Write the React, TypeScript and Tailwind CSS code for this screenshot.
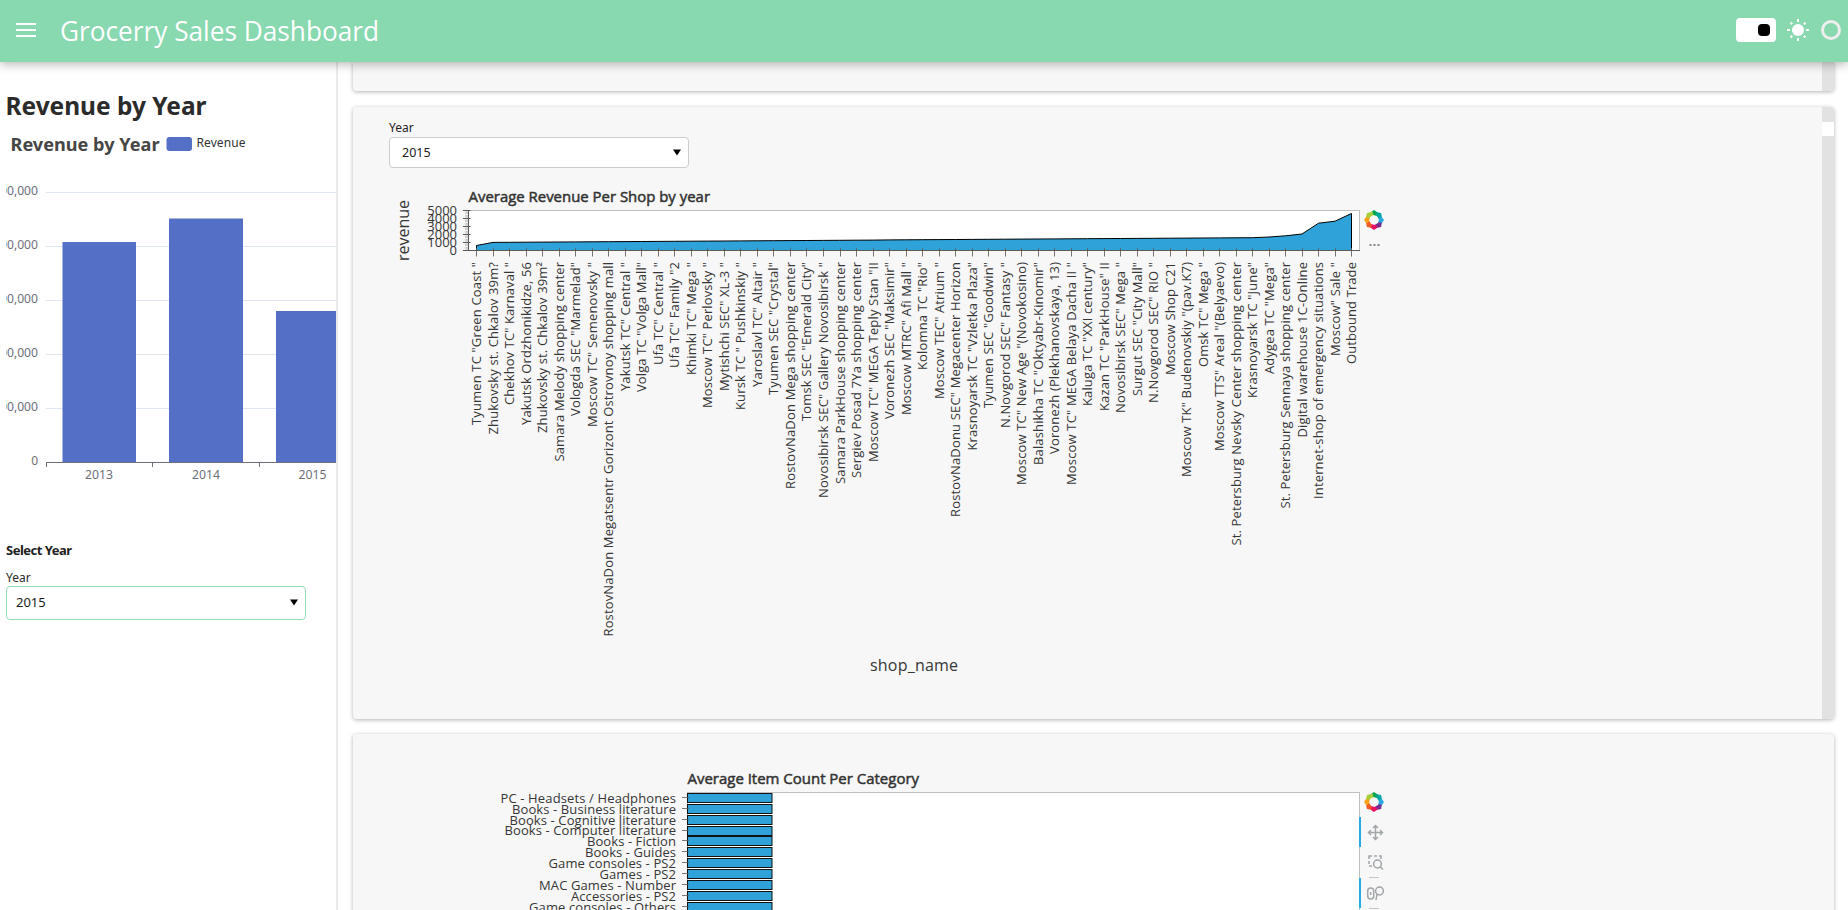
import React from "react";

const SHOPS: [string, number][] = [
  ['Tyumen TC "Green Coast "', 425], ["Zhukovsky st. Chkalov 39m?", 434.5], ['Chekhov TC" Karnaval "', 405], ["Yakutsk Ordzhonikidze, 56", 425],
  ["Zhukovsky st. Chkalov 39m²", 433], ["Samara Melody shopping center", 461.5], ['Vologda SEC "Marmelad"', 416], ['Moscow TC" Semenovsky "', 427],
  ["RostovNaDon Megatsentr Gorizont Ostrovnoy shopping mall", 636.5], ['Yakutsk TC" Central "', 391], ['Volga TC "Volga Mall"', 392], ['Ufa TC" Central "', 365],
  ['Ufa TC" Family "2', 368], ['Khimki TC" Mega "', 375], ['Moscow TC" Perlovsky "', 408], ['Mytishchi SEC" XL-3 "', 391], ['Kursk TC " Pushkinskiy "', 410],
  ['Yaroslavl TC" Altair "', 387], ['Tyumen SEC "Crystal"', 395], ["RostovNaDon Mega shopping center", 489], ['Tomsk SEC "Emerald City"', 421],
  ['Novosibirsk SEC" Gallery Novosibirsk "', 498], ["Samara ParkHouse shopping center", 484], ["Sergiev Posad 7Ya shopping center", 478], ['Moscow TC" MEGA Teply Stan "II', 462],
  ['Voronezh SEC "Maksimir"', 419], ['Moscow MTRC" Afi Mall "', 415], ['Kolomna TC "Rio"', 370], ['Moscow TEC" Atrium "', 399], ['RostovNaDonu SEC" Megacenter Horizon', 517],
  ['Krasnoyarsk TC "Vzletka Plaza"', 450.5], ['Tyumen SEC "Goodwin"', 408], ['N.Novgorod SEC" Fantasy "', 428], ['Moscow TC" New Age "(Novokosino)', 485],
  ['Balashikha TC "Oktyabr-Kinomir"', 465], ["Voronezh (Plekhanovskaya, 13)", 454], ['Moscow TC" MEGA Belaya Dacha II "', 485], ['Kaluga TC "XXI century"', 406],
  ['Kazan TC "ParkHouse" II', 411], ['Novosibirsk SEC" Mega "', 413], ['Surgut SEC "City Mall"', 396], ['N.Novgorod SEC" RIO "', 403], ["Moscow Shop C21", 375],
  ['Moscow TK" Budenovskiy "(pav.K7)', 477], ['Omsk TC" Mega "', 367], ['Moscow TTS" Areal "(Belyaevo)', 451], ["St. Petersburg Nevsky Center shopping center", 545.5],
  ['Krasnoyarsk TC "June"', 398], ['Adygea TC "Mega"', 374], ["St. Petersburg Sennaya shopping center", 508.5], ["Digital warehouse 1C-Online", 437.5],
  ["Internet-shop of emergency situations", 499], ['Moscow" Sale "', 356], ["Outbound Trade", 364],
];

const shopX = (i: number) => 476.5 + (i * 875) / 53;

// Height of the area above the baseline, in pixels (8 px = 1000).
const LATE: Record<number, number> = { 0: 5, 1: 8.1, 48: 13.5, 49: 14.7, 50: 16.5, 51: 27.3, 52: 29.3, 53: 37 };
const shopH = (i: number) => LATE[i] ?? 8.2 + ((i - 2) * 4.6) / 45;

const CATEGORIES: [string, number][] = [
  ["PC - Headsets / Headphones", 500.5], ["Books - Business literature", 512], ["Books - Cognitive literature", 509.5], ["Books - Computer literature", 504.5],
  ["Books - Fiction", 587], ["Books - Guides", 585], ["Game consoles - PS2", 548.5], ["Games - PS2", 599.5], ["MAC Games - Number", 539],
  ["Accessories - PS2", 571], ["Game consoles - Others", 529],
];

const CHART_FONT = "'Open Sans', 'Noto Sans', sans-serif";

function BokehLogo() {
  const colors = ["#00a551", "#00a79d", "#29a9df", "#7b2d8e", "#ed1164", "#f15a24", "#f9a11b", "#a6ce39"];
  return (
    <svg width="20" height="20" viewBox="-10 -10 20 20" className="block">
      {colors.map((c, i) => (
        <path key={c} d="M-3.6 -7.4 L0 -10 L4.8 -6.8 L3.2 -4 L-2 -5.2 Z" fill={c} transform={`rotate(${i * 45})`} />
      ))}
    </svg>
  );
}

function Select({ className }: { className: string }) {
  return (
    <div className={`flex w-[300px] items-center rounded border bg-white text-[#212121] ${className}`}>
      <span className="flex-1">2015</span>
      <svg width="8" height="7" viewBox="0 0 8 7" className="mb-px"><path d="M0 0.5H8L4 6.5Z" fill="#000" /></svg>
    </div>
  );
}

function Header() {
  return (
    <header className="relative z-10 flex h-[62px] shrink-0 items-center bg-[#88d8b0] pl-4 pr-[7px] text-white shadow-[0_2px_10px_rgba(0,0,0,0.3)]">
      <svg width="20" height="14" viewBox="0 0 20 14" className="mb-0.5 block"><path d="M0 1H20M0 7H20M0 13H20" stroke="#fff" strokeWidth="2" /></svg>
      <svg width="330" height="62" className="ml-6 block">
        <text x="0" y="41" fontSize="27" textLength="319" lengthAdjust="spacingAndGlyphs" fill="#fff" fontFamily={CHART_FONT}>Grocerry Sales Dashboard</text>
      </svg>
      <div className="ml-auto flex items-center pb-0.5">
        <div className="flex h-6 w-10 items-center justify-end rounded bg-white pr-1.5">
          <div className="h-3 w-3 rounded bg-black" />
        </div>
        <svg width="22" height="22" viewBox="-11 -11 22 22" className="ml-[11px] block">
          <circle r="6" fill="#fff" />
          {[0, 45, 90, 135, 180, 225, 270, 315].map((a, i) => (
            <rect key={a} x="-1" y={i % 2 ? -10.6 : -11} width="2" height={i % 2 ? 2.4 : 3} fill="#fff" transform={`rotate(${a})`} />
          ))}
        </svg>
        <div className="ml-3 h-5 w-5 rounded-full border-[3px] border-[#eeeeee]" />
      </div>
    </header>
  );
}

function RevenueByYear() {
  return (
    <svg width="330" height="360" viewBox="6 130 330 360" className="block" fontFamily="'Noto Sans', 'Open Sans', sans-serif">
      <text x="10.500" y="151" fontSize="18" fontWeight="700" textLength="149" lengthAdjust="spacingAndGlyphs" fill="#464646">Revenue by Year</text>
      <rect x="166.500" y="137" width="25.500" height="14" rx="3" fill="#5470c6" />
      <text x="196.5" y="147" fontSize="12" textLength="49" fill="#333">Revenue</text>
      {[192, 246, 300, 354, 408].map((y) => <path key={y} d={`M46 ${y + 0.5}H336`} stroke="#E0E6F1" />)}
      {[190, 244, 298, 352, 406].map((y) => (
        <text key={y} x="38" y={y + 5} fontSize="12" textAnchor="end" textLength="38" lengthAdjust="spacingAndGlyphs" fill="#6E7079">00,000</text>
      ))}
      <text x="38" y="465" fontSize="12" textAnchor="end" fill="#6E7079">0</text>
      <rect x="62.5" y="242" width="73.500" height="220" fill="#5470c6" />
      <rect x="169" y="218.500" width="74" height="243.500" fill="#5470c6" />
      <rect x="276" y="311" width="74" height="151" fill="#5470c6" />
      <path d="M46 462.500H336M46.500 462V467M152.500 462V467M259.500 462V467" stroke="#6E7079" />
      {([["2013", 99], ["2014", 206], ["2015", 312.5]] as [string, number][]).map(([t, x]) => (
        <text key={t} x={x} y="479" fontSize="12" textAnchor="middle" textLength="28" lengthAdjust="spacingAndGlyphs" fill="#6E7079">{t}</text>
      ))}
    </svg>
  );
}

function Sidebar() {
  return (
    <aside className="w-[338px] shrink-0 overflow-hidden border-r-2 border-[#eaeaea] pl-1.5">
      <svg width="320" height="40" viewBox="6 86 320 40" className="mt-6 block">
        <text x="5.500" y="115" fontSize="25" fontWeight="700" textLength="201" lengthAdjust="spacingAndGlyphs" fill="#2b2b2b" fontFamily="'Noto Sans', sans-serif">Revenue by Year</text>
      </svg>
      <div className="mt-1"><RevenueByYear /></div>
      <div className="mt-[50px] text-[13px] font-bold leading-5 tracking-[-0.5px] text-[#212121]">Select Year</div>
      <div className="mt-2.5 text-[12px] leading-[16px] text-[#2b2b2b]">Year</div>
      <Select className="h-[34px] border-[#94dcb7] pl-[9px] pr-[7px] text-[13px]" />
    </aside>
  );
}

function ShopChart() {
  const area = SHOPS.map((_, i) => `${shopX(i).toFixed(1)} ${(250.5 - shopH(i)).toFixed(1)}`).join("L");
  return (
    <svg width="1000" height="500" viewBox="389 185 1000 500" className="block" fontFamily={CHART_FONT} fill="#363636">
      <text x="468.500" y="202" fontSize="15" stroke="#333" strokeWidth=".5" textLength="241.500" lengthAdjust="spacingAndGlyphs" fill="#333">Average Revenue Per Shop by year</text>
      <rect x="468.500" y="210.500" width="891" height="40" fill="#fff" stroke="#bfbfbf" />
      <path d={`M476.500 250.500L${area}L1351.500 250.500Z`} fill="#30a2da" stroke="#000" />
      <path d="M468.500 210V251M468 250.500H1360" stroke="#5b5b5b" fill="none" />
      {[0, 1, 2, 3, 4, 5].map((v) => (
        <g key={v}>
          <path d={`M463 ${250.5 - v * 8}H470.500`} stroke="#5b5b5b" />
          <text x="457" y={255 - v * 8} fontSize="13" textAnchor="end">{v * 1000}</text>
        </g>
      ))}
      {Array.from({ length: 25 }, (_, i) => (
        <path key={i} d={`M465 ${250.5 - i * 1.6}H469`} stroke="#5b5b5b" strokeWidth=".5" opacity=".7" />
      ))}
      <text transform="translate(409 261)rotate(-90)" fontSize="16" textLength="61">revenue</text>
      {SHOPS.map(([name, end], i) => {
        const x = Math.round(shopX(i) - 0.2);
        return (
          <g key={name}>
            <path d={`M${x + 0.5} 248V256.500`} stroke="#5b5b5b" opacity=".85" />
            <text transform={`translate(${x + 5} ${end})rotate(-90)`} fontSize="13" textLength={end - 262}>{name}</text>
          </g>
        );
      })}
      <text x="870" y="671" fontSize="16" textLength="88">shop_name</text>
      <g transform="translate(1364 210)"><BokehLogo /></g>
      <path d="M1369.500 245h2m2 0h2m2 0h2" stroke="#888" strokeWidth="2" />
    </svg>
  );
}

function CategoryChart() {
  return (
    <svg width="920" height="141" viewBox="480 769 920 141" className="block" fontFamily={CHART_FONT} fill="#363636">
      <text x="687.500" y="784" fontSize="15" stroke="#333" strokeWidth=".5" textLength="231.500" lengthAdjust="spacingAndGlyphs" fill="#333">Average Item Count Per Category</text>
      <rect x="687.500" y="792.500" width="672" height="200" fill="#fff" stroke="#bfbfbf" />
      {CATEGORIES.map(([name, start], i) => {
        const top = 793 + Math.round(i * 10.9 - 0.11);
        return (
          <g key={name}>
            <rect x="687.500" y={top + 0.5} width="84.500" height="9" fill="#30a2da" stroke="#111" />
            <path d={`M682 ${top + 4.5}H689`} stroke="#5b5b5b" opacity=".8" />
            <text x={start} y={803 + Math.round(i * 10.9 - 0.25)} fontSize="13" textLength={676 - start}>{name}</text>
          </g>
        );
      })}
      <g transform="translate(1364 792)"><BokehLogo /></g>
      <path d="M1360 817V847M1360 878V908" stroke="#26aae1" strokeWidth="2" />
      <g fill="none" stroke="#a1a6a9" strokeWidth="1.500">
        <path d="M1368.500 832.500H1382.500M1375.500 825.500V839.500M1373 828L1375.500 825.500L1378 828M1373 837L1375.500 839.500L1378 837M1371 830L1368.500 832.500L1371 835M1380 830L1382.500 832.500L1380 835" />
        <path d="M1369 859V856H1372M1374 856H1377M1379 856H1381V859M1369 861V864M1369 866H1372" />
        <circle cx="1377.500" cy="864" r="3.900" />
        <path d="M1380 866.500L1383 869.500" />
        <path d="M1369 877.500H1379M1369 908.500H1379" strokeWidth="1" stroke="#c4c7c9" />
        <rect x="1367.700" y="888" width="6" height="11" rx="3" />
        <path d="M1370.700 892V895" />
        <circle cx="1379.500" cy="891" r="3.900" />
        <path d="M1377 894L1376 900" />
      </g>
    </svg>
  );
}

const card = "shrink-0 rounded bg-[#f7f7f7] shadow-[0_1px_4px_rgba(0,0,0,0.3)] flex overflow-hidden";

export default function App() {
  return (
    <div className="flex h-[910px] w-[1848px] flex-col overflow-hidden bg-white font-['Noto_Sans','Open_Sans',sans-serif]">
      <Header />
      <div className="flex min-h-0 flex-1">
        <Sidebar />
        <main className="flex min-w-0 flex-1 flex-col gap-[15px] overflow-hidden pl-[15px] pr-3.5">
          <section className={`${card} h-[29px] justify-end rounded-t-none`}>
            <div className="w-3 bg-[#e2e2e2]" />
          </section>
          <section className={`${card} mt-px h-[612px]`}>
            <div className="flex-1 pl-9 pt-3">
              <div className="text-[12px] leading-[18px] text-[#212121]">Year</div>
              <Select className="h-[31px] border-[#cccccc] pl-3 pr-[7px] pt-px text-[12.5px]" />
              <div className="mt-[17px]"><ShopChart /></div>
            </div>
            <div className="w-3 bg-[#e2e2e2] pt-[15px]">
              <div className="h-3.5 bg-white" />
            </div>
          </section>
          <section className={`${card} h-[240px] rounded-b-none pl-[127px] pt-[35px]`}>
            <CategoryChart />
          </section>
        </main>
      </div>
    </div>
  );
}
